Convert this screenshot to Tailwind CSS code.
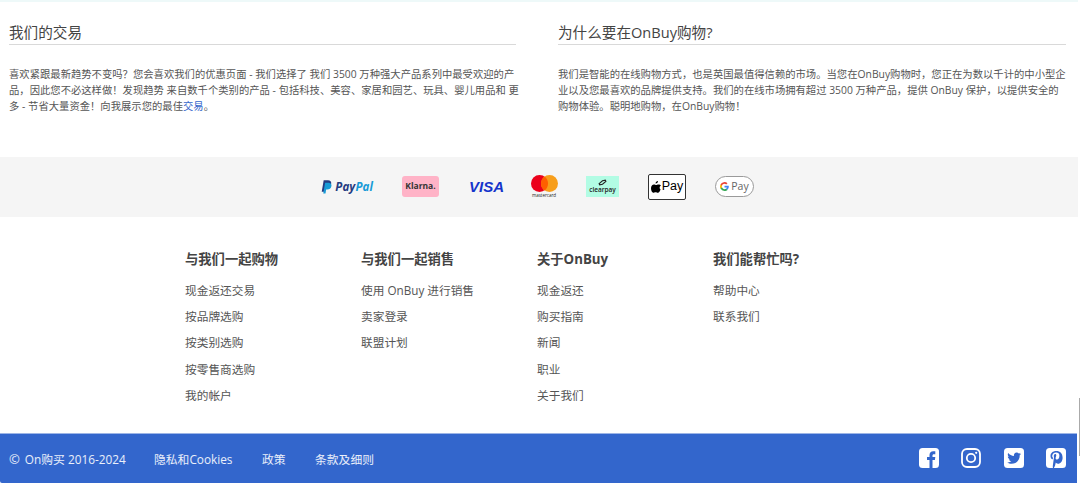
<!DOCTYPE html>
<html lang="zh-CN">
<head>
<meta charset="utf-8">
<title>OnBuy</title>
<script src="https://cdn.jsdelivr.net/npm/@tailwindcss/browser@4"></script>
</head>
<body class="bg-white">
<div class="relative w-[1080px] h-[485px] overflow-hidden bg-white font-['Open_Sans','Noto_Sans_CJK_SC',sans-serif] text-[#555]">
  <div class="h-[2px] w-[1078px] bg-[#eef9f9]"></div>
  <section class="flex gap-[42px] pl-[9px] pr-[14px] h-[155px]">
    <div class="w-[507px]">
      <h2 class="mt-[19px] h-[24px] border-b border-[#d9d9d9] text-[14.6px] leading-[22px] text-[#444]">我们的交易</h2>
      <p class="mt-[22px] -mr-[4px] text-[10.3px] tracking-[0.03px] leading-[15.8px] text-[#555]">喜欢紧跟最新趋势不变吗&#xFF1F;您会喜欢我们的优惠页面 - 我们选择了 我们 3500 万种强大产品系列中最受欢迎的产品&#xFF0C;因此您不必这样做&#xFF01;发现趋势 来自数千个类别的产品 - 包括科技、美容、家居和园艺、玩具、婴儿用品和 更多 - 节省大量资金&#xFF01;向我展示您的最佳<a class="text-[#3366cc]">交易</a>。</p>
    </div>
    <div class="w-[508px]">
      <h2 class="mt-[19px] h-[24px] border-b border-[#d9d9d9] text-[14.6px] leading-[22px] text-[#444]">为什么要在OnBuy购物?</h2>
      <p class="mt-[22px] text-[10.33px] leading-[15.8px] text-[#555]">我们是智能的在线购物方式&#xFF0C;也是英国最值得信赖的市场。当您在OnBuy购物时&#xFF0C;您正在为数以千计的中小型企业以及您最喜欢的品牌提供支持。我们的在线市场拥有超过 3500 万种产品&#xFF0C;提供 OnBuy 保护&#xFF0C;以提供安全的购物体验。聪明地购物&#xFF0C;在OnBuy购物&#xFF01;</p>
    </div>
  </section>

  <section class="w-[1078px] h-[60px] bg-[#f5f5f5] relative flex items-center pb-[1px]">
    <div class="flex items-center pl-[321px]">
      <div class="w-[52px] flex items-center gap-[3px]">
        <svg class="w-[12px] h-[14px]" viewBox="0 0 11 13"><path fill="#253b80" d="M2.600 0h4.200c2.200 0 3.500 1.200 3.100 3.300-.4 2.300-2 3.500-4.200 3.500H4.200l-.7 4.200H.7z"/><path fill="#179bd7" d="M4 2.400h2.700c1.200 0 4 .2 3.400 3.300-.4 2.300-2 3.200-4 3.200H5l-.6 4H2.200z"/></svg>
        <span class="text-[11.5px] leading-none font-bold italic font-['Open_Sans'] tracking-[0.1px]"><span class="text-[#253b80]">Pay</span><span class="text-[#179bd7]">Pal</span></span>
      </div>
      <div class="ml-[29px] w-[37px] h-[21px] rounded-[3px] bg-[#ffb3c7] flex items-center justify-center text-[8.5px] font-bold text-[#333] font-['Open_Sans']">Klarna.</div>
      <div class="ml-[30px] w-[33px] text-center text-[15px] leading-none font-bold italic text-[#1434cb] font-['Liberation_Sans']">VISA</div>
      <div class="ml-[28px] w-[28px] flex flex-col items-center">
        <svg class="w-[27px] h-[17px]" viewBox="0 0 27 17"><circle cx="8.500" cy="8.500" r="8.500" fill="#eb001b"/><circle cx="18.500" cy="8.500" r="8.500" fill="#f79e1b"/><path fill="#ff5f00" d="M13.500 1.600a8.500 8.500 0 0 1 0 13.800 8.500 8.500 0 0 1 0-13.800z"/></svg>
        <span class="text-[4.5px] leading-[6px] text-[#222] font-['Open_Sans']">mastercard</span>
      </div>
      <div class="ml-[28px] w-[33px] h-[21px] bg-[#b2fce4] flex flex-col items-center justify-center text-[#222]">
        <svg class="w-[9px] h-[7px]" viewBox="0 0 8 6"><path fill="none" stroke="#222" stroke-width="1" d="M1 4 4 1.500 6.500 1 7 2 4 4.500 1.500 5z"/></svg>
        <span class="text-[6.5px] leading-[8px] font-semibold font-['Open_Sans']">clearpay</span>
      </div>
      <div class="ml-[29px] w-[38px] h-[26px] rounded-[2px] border border-[#333] bg-white flex items-center justify-center gap-[1px] text-black">
        <svg class="w-[10px] h-[12px]" viewBox="0 0 10 12"><path fill="#000" d="M7 0c.1 1.200-1 2.600-2.400 2.500C4.400 1.300 5.700.1 7 0zM9.600 8.400c-.6 1.400-1.500 3.400-2.700 3.400-1 0-1.300-.6-2.300-.6s-1.400.6-2.300.6C.9 11.800 0 9.300 0 7.300c0-2.300 1.400-3.900 3-3.900 1 0 1.600.6 2.200.6.600 0 1.300-.7 2.500-.6.700 0 1.700.3 2.200 1.100-1.800 1.100-1.500 3.400-.3 3.900z"/></svg>
        <span class="text-[12.5px] leading-none font-['Liberation_Sans']">Pay</span>
      </div>
      <div class="ml-[29px] w-[39px] h-[21px] rounded-[11px] border-[1.500px] border-[#9a9a9a] bg-white flex items-center justify-center gap-[2px]">
        <svg class="w-[9px] h-[9px]" viewBox="0 0 18 18"><path fill="#4285f4" d="M17.600 9.200c0-.6-.1-1.200-.2-1.800H9v3.400h4.800a4.100 4.100 0 0 1-1.800 2.700v2.200h2.900c1.700-1.600 2.700-3.800 2.700-6.500z"/><path fill="#34a853" d="M9 18c2.400 0 4.500-.8 5.900-2.200L12 13.500c-.8.500-1.800.9-3 .9-2.300 0-4.300-1.600-5-3.700H1v2.300A9 9 0 0 0 9 18z"/><path fill="#fbbc05" d="M4 10.700a5.400 5.400 0 0 1 0-3.400V5H1a9 9 0 0 0 0 8z"/><path fill="#ea4335" d="M9 3.600c1.300 0 2.500.5 3.400 1.300L15 2.400A9 9 0 0 0 1 5l3 2.300c.7-2.100 2.700-3.700 5-3.700z"/></svg>
        <span class="text-[10.5px] leading-none text-[#666] font-['Open_Sans']">Pay</span>
      </div>
    </div>
  </section>

  <section class="pl-[185px] pt-[33px] h-[216px] grid grid-cols-[176px_176px_176px_176px] content-start">
    <div>
      <h3 class="text-[13.3px] leading-[18px] font-bold text-[#444]">与我们一起购物</h3>
      <ul class="mt-[8.500px] text-[11.7px] leading-[26.4px] text-[#555]"><li>现金返还交易</li><li>按品牌选购</li><li>按类别选购</li><li>按零售商选购</li><li>我的帐户</li></ul>
    </div>
    <div>
      <h3 class="text-[13.3px] leading-[18px] font-bold text-[#444]">与我们一起销售</h3>
      <ul class="mt-[8.500px] text-[11.7px] leading-[26.4px] text-[#555]"><li>使用 OnBuy 进行销售</li><li>卖家登录</li><li>联盟计划</li></ul>
    </div>
    <div>
      <h3 class="text-[13.3px] leading-[18px] font-bold text-[#444]">关于OnBuy</h3>
      <ul class="mt-[8.500px] text-[11.7px] leading-[26.4px] text-[#555]"><li>现金返还</li><li>购买指南</li><li>新闻</li><li>职业</li><li>关于我们</li></ul>
    </div>
    <div>
      <h3 class="text-[13.3px] leading-[18px] font-bold text-[#444]">我们能帮忙吗?</h3>
      <ul class="mt-[8.500px] text-[11.7px] leading-[26.4px] text-[#555]"><li>帮助中心</li><li>联系我们</li></ul>
    </div>
  </section>

  <footer class="w-[1077px] h-[50px] bg-[#3366cc] border-t border-[#9db5e6] flex items-center justify-between pl-[9px] pr-[11px] text-white/90 text-[11.8px] rounded-bl-[2px]">
    <div class="flex items-center pt-[2px]">
      <span class="w-[145px] flex items-center"><span class="text-[13px] leading-none mr-[5px]">©</span>On购买 2016-2024</span>
      <span class="w-[108px]">隐私和Cookies</span>
      <span class="w-[53px]">政策</span>
      <span>条款及细则</span>
    </div>
    <div class="flex items-center gap-[22.300px] pb-[1px]">
      <svg class="w-[20px] h-[20px]" viewBox="0 0 20 20"><rect width="20" height="20" rx="3.500" fill="#fff"/><path fill="#3366cc" d="M10.500 20v-8H8V9h2.500V7c0-2.500 1.500-3.800 3.700-3.800h2.100V6.200h-1.400c-1.100 0-1.400.6-1.400 1.300V9h2.800l-.4 3h-2.400v8z"/></svg>
      <svg class="w-[20px] h-[20px]" viewBox="0 0 20 20" fill="none" stroke="#fff"><rect x="1" y="1" width="18" height="18" rx="5" stroke-width="1.800"/><circle cx="10" cy="10" r="4.200" stroke-width="1.800"/><circle cx="15.200" cy="4.800" r="1.100" fill="#fff" stroke="none"/></svg>
      <svg class="w-[20px] h-[20px]" viewBox="0 0 20 20"><rect width="20" height="20" rx="3.500" fill="#fff"/><path fill="#3366cc" d="M17 5.800c-.5.200-1 .4-1.600.4.600-.4 1-.9 1.200-1.500-.5.300-1.100.6-1.800.7a2.800 2.800 0 0 0-4.800 2.500C7.700 7.800 5.600 6.700 4.200 5c-.8 1.300-.4 3 .9 3.800-.5 0-.9-.1-1.300-.3 0 1.400 1 2.600 2.300 2.800-.4.100-.9.100-1.300 0 .4 1.100 1.400 1.900 2.600 2-1.200.9-2.700 1.300-4.200 1.100 1.300.8 2.800 1.300 4.400 1.300 5.300 0 8.300-4.400 8.100-8.400.6-.4 1.100-.9 1.400-1.500z"/></svg>
      <svg class="w-[20px] h-[20px]" viewBox="0 0 20 20"><rect width="20" height="20" rx="3.500" fill="#fff"/><path fill="#3366cc" d="M10.300 3C6.700 3 4.500 5.300 4.500 8c0 1.300.6 2.800 1.700 3.300.3.100.5 0 .6-.3l.2-.9c0-.2 0-.3-.2-.5-.4-.5-.6-1-.6-1.700 0-1.900 1.500-3.500 3.900-3.500 2.100 0 3.300 1.300 3.300 3 0 2.300-1 4.200-2.500 4.200-.8 0-1.500-.7-1.300-1.500.2-1 .7-2.100.7-2.800 0-.6-.3-1.200-1-1.200-.8 0-1.500.9-1.500 2 0 .7.200 1.200.2 1.200L6.900 17c-.2.900-.1 2.100 0 3h1c.5-.9 1.100-2.300 1.300-3l.6-2.400c.3.600 1.200 1.100 2.100 1.100 2.800 0 4.700-2.600 4.700-6C16.600 5.400 14.100 3 10.300 3z"/></svg>
    </div>
  </footer>
  <div class="absolute left-[1079px] top-[398px] w-[1px] h-[58px] bg-[#aaa]"></div>
</div>
</body>
</html>
